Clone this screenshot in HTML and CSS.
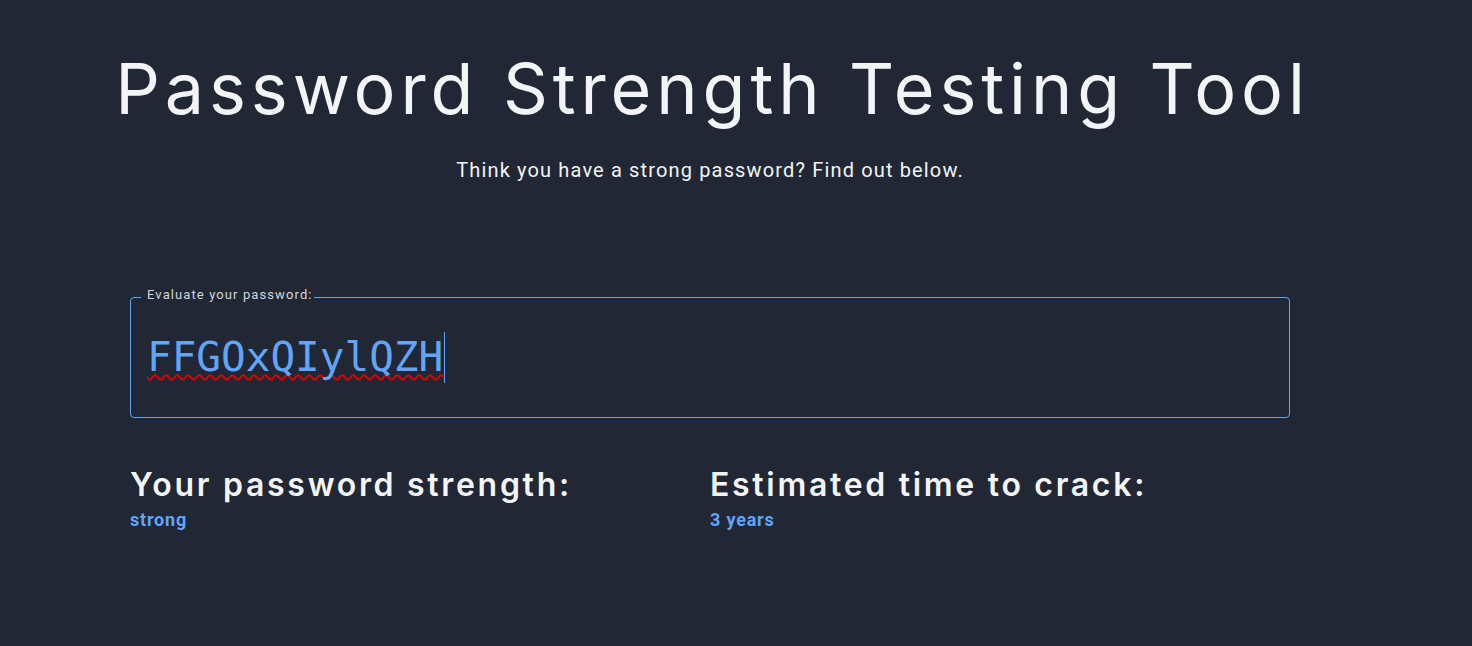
FILE: index.html
```html
<!DOCTYPE html>
<html lang="en">
<head>
<meta charset="utf-8">
<title>Password Strength Testing Tool</title>
<link rel="stylesheet" href="styles.css">
</head>
<body>
<main class="page">
  <header class="hero">
    <h1 class="title">Password Strength Testing Tool</h1>
    <p class="subtitle">Think you have a strong password? Find out below.</p>
  </header>
  <fieldset class="field">
    <legend class="field-label">Evaluate your password:</legend>
    <div class="field-value"><span class="typed">FFGOxQIylQZH</span><span class="caret"></span></div>
  </fieldset>
  <section class="results">
    <div class="result">
      <h2 class="result-title">Your password strength:</h2>
      <p class="result-value">strong</p>
    </div>
    <div class="result">
      <h2 class="result-title">Estimated time to crack:</h2>
      <p class="result-value">3 years</p>
    </div>
  </section>
</main>
</body>
</html>
```
FILE: styles.css
```css
html, body {
  margin: 0;
  padding: 0;
  background: #212735;
  height: 100%;
}
body {
  font-family: Roboto, "Liberation Sans", sans-serif;
  color: #f3f4f6;
}
.page {
  width: 1160px;
  margin-left: 130px;
  padding-top: 47px;
}
.hero {
  display: flex;
  flex-direction: column;
  align-items: center;
}
.title {
  margin: 0 0 0 5px;
  font-family: Inter, "DejaVu Sans", sans-serif;
  font-weight: 400;
  font-size: 70px;
  line-height: 84px;
  letter-spacing: 4.9px;
  color: #f3f4f6;
  white-space: nowrap;
}
.subtitle {
  margin: 25px 0 0;
  font-size: 20px;
  line-height: 28px;
  letter-spacing: 1.15px;
  color: #f3f4f6;
}
.field {
  margin: 103px 0 0;
  padding: 25px 16px 34px;
  border: 1px solid #60a5fa;
  border-radius: 4px;
  min-width: 0;
}
.field-label {
  margin-left: -6px;
  padding: 0 1px 5px 6px;
  font-size: 13px;
  line-height: 15px;
  letter-spacing: 1.1px;
  color: #d1d5db;
}
.field-value {
  display: flex;
  align-items: stretch;
  height: 51px;
  font-family: "DejaVu Sans Mono", monospace;
  font-size: 41px;
  line-height: 51px;
  color: #60a5fa;
}
.typed {
  text-decoration: underline wavy #e60000;
  text-decoration-thickness: 1.5px;
  text-underline-offset: 3px;
  text-decoration-skip-ink: none;
}
.caret {
  width: 1px;
  margin-left: 1px;
  background: #60a5fa;
}
.results {
  display: grid;
  grid-template-columns: 1fr 1fr;
  margin-top: 47px;
}
.result-title {
  margin: 0;
  font-family: Inter, "DejaVu Sans", sans-serif;
  font-weight: 600;
  font-size: 32px;
  line-height: 40px;
  letter-spacing: 2.7px;
  color: #f3f4f6;
}
.result-value {
  margin: 3px 0 0;
  font-weight: 700;
  font-size: 18px;
  line-height: 24px;
  letter-spacing: 0.8px;
  color: #60a5fa;
}
```
